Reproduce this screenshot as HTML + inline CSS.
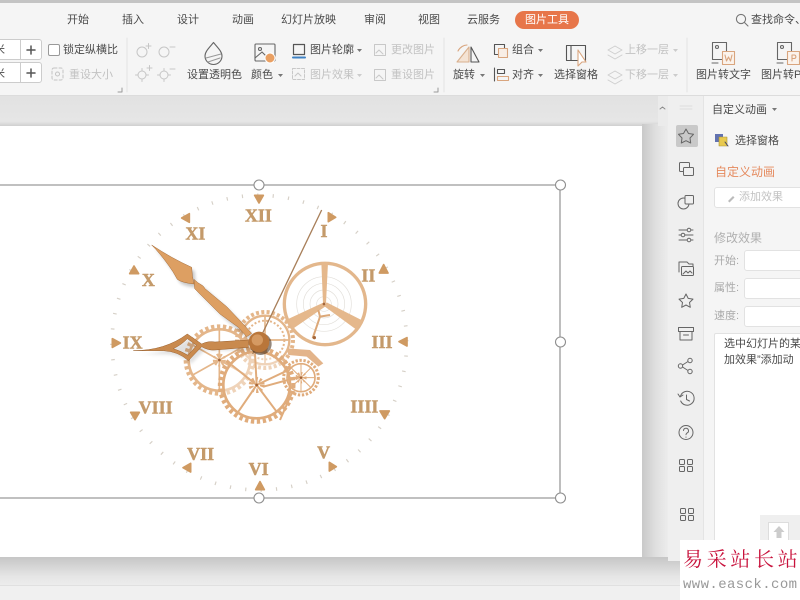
<!DOCTYPE html>
<html lang="zh"><head><meta charset="utf-8"><title>WPS</title>
<style>
html,body{margin:0;padding:0;background:#eee}
#p{position:relative;width:800px;height:600px;overflow:hidden;background:#e5e5e5;font-family:"Liberation Sans","Noto Sans CJK SC",sans-serif;font-size:11px;color:#444;filter:blur(.3px)}
#p div,#p span{position:absolute;white-space:nowrap}
.t{line-height:14px;margin-top:-7px;color:#4a4a4a}
.d{color:#c2c2c2}
.g{color:#aaa}
svg{position:absolute;left:0;top:0}
.box{background:#fff;border:1px solid #e2e2e2;border-radius:3px;box-sizing:border-box}
.num{font-family:"Liberation Serif",serif;font-weight:bold;font-size:54px;fill:#c49a6a;stroke:#c49a6a;stroke-width:1.5;text-anchor:middle}
</style></head><body><div id="p">

<div style="left:0;top:0;width:800px;height:3px;background:#c4c4c4"></div>
<div style="left:0;top:3px;width:800px;height:93px;background:#f5f5f5;border-bottom:1px solid #dcdcdc;box-sizing:border-box"></div>
<div style="left:0;top:96px;width:668px;height:30px;background:linear-gradient(#e2e2e2,#e6e6e6 85%,#cfcfcf)"></div>

<div style="left:0;top:126px;width:642px;height:431px;background:#fff"></div>
<div style="left:642px;top:124px;width:26px;height:440px;background:linear-gradient(90deg,#c9c9c9,#e0e0e0 55%,#ececec)"></div>
<div style="left:0;top:557px;width:680px;height:28px;background:linear-gradient(#c6c6c6,#e6e6e6 70%,#ececec)"></div>
<div style="left:0;top:585px;width:680px;height:15px;background:#f0f0f0;border-top:1px solid #e0e0e0;box-sizing:border-box"></div>
<div style="left:658px;top:96px;width:10px;height:30px;background:#ebebeb"></div>
<div style="left:668px;top:96px;width:35px;height:465px;background:#efefef"></div>
<div style="left:703px;top:96px;width:97px;height:465px;background:#f5f5f5;border-left:1px solid #e4e4e4;box-sizing:border-box"></div>

<span class="t" style="left:67px;top:20px">开始</span>
<span class="t" style="left:122px;top:20px">插入</span>
<span class="t" style="left:177px;top:20px">设计</span>
<span class="t" style="left:232px;top:20px">动画</span>
<span class="t" style="left:281px;top:20px">幻灯片放映</span>
<span class="t" style="left:364px;top:20px">审阅</span>
<span class="t" style="left:418px;top:20px">视图</span>
<span class="t" style="left:467px;top:20px">云服务</span>
<div style="left:515px;top:11px;width:64px;height:18px;border-radius:9px;background:#e7764a"></div>
<span class="t" style="left:525px;top:20px;color:#fff">图片工具</span>
<span class="t" style="left:751px;top:20px">查找命令、</span>

<div class="box" style="left:-6px;top:39px;width:48px;height:21px;border-color:#ccc"></div>
<div class="box" style="left:-6px;top:62px;width:48px;height:21px;border-color:#ccc"></div>
<span class="t" style="left:-6px;top:50px">米</span>
<span class="t" style="left:-6px;top:74px">米</span>
<span class="t" style="left:63px;top:50px">锁定纵横比</span>
<span class="t d" style="left:69px;top:75px">重设大小</span>
<span class="t" style="left:187px;top:75px">设置透明色</span>
<span class="t" style="left:251px;top:75px">颜色</span>
<span class="t" style="left:310px;top:50px">图片轮廓</span>
<span class="t d" style="left:310px;top:75px">图片效果</span>
<span class="t d" style="left:391px;top:50px">更改图片</span>
<span class="t d" style="left:391px;top:75px">重设图片</span>
<span class="t" style="left:453px;top:75px">旋转</span>
<span class="t" style="left:512px;top:50px">组合</span>
<span class="t" style="left:512px;top:75px">对齐</span>
<span class="t" style="left:554px;top:75px">选择窗格</span>
<span class="t d" style="left:625px;top:50px">上移一层</span>
<span class="t d" style="left:625px;top:75px">下移一层</span>
<span class="t" style="left:696px;top:75px">图片转文字</span>
<span class="t" style="left:761px;top:75px">图片转PDF</span>

<span class="t" style="left:712px;top:110px">自定义动画</span>
<span class="t" style="left:735px;top:141px">选择窗格</span>
<span class="t" style="left:715px;top:172px;color:#e58a5e;font-size:12px">自定义动画</span>
<div class="box" style="left:714px;top:187px;width:100px;height:21px"></div>
<span class="t d" style="left:739px;top:197px">添加效果</span>
<span class="t" style="left:714px;top:238px;color:#b0b0b0;font-size:12px">修改效果</span>
<span class="t g" style="left:714px;top:261px">开始:</span>
<span class="t g" style="left:714px;top:288px">属性:</span>
<span class="t g" style="left:714px;top:316px">速度:</span>
<div class="box" style="left:744px;top:250px;width:70px;height:21px"></div>
<div class="box" style="left:744px;top:278px;width:70px;height:21px"></div>
<div class="box" style="left:744px;top:306px;width:70px;height:21px"></div>
<div class="box" style="left:714px;top:333px;width:100px;height:230px;border-radius:2px"></div>
<span class="t" style="left:724px;top:344px">选中幻灯片的某</span>
<span class="t" style="left:724px;top:360px">加效果”添加动</span>
<div style="left:760px;top:515px;width:40px;height:30px;background:#efefef"></div>
<div style="left:768px;top:522px;width:21px;height:23px;background:#fff;border:1px solid #ddd;box-sizing:border-box"></div>

<svg width="800" height="600" viewBox="0 0 800 600" fill="none" stroke-linecap="round" stroke-linejoin="round">
<g stroke="#e2e2e2"><path d="M127 38V92M444 38V92M687 38V92"/></g>
<g stroke="#777" stroke-width="1.1"><circle cx="741" cy="19" r="4.6"/><path d="M744.5 22.5L748 26"/></g>
<g stroke="#ccc"><path d="M20.5 40V59M20.5 63V82"/></g>
<g stroke="#555" stroke-width="1.5"><path d="M27 50H35M31 46V54M27 73H35M31 69V77"/></g>
<rect x="48.500" y="44.500" width="11" height="11" rx="1.500" stroke="#999" fill="#fff"/>
<g stroke="#c4c4c4"><rect x="52" y="68" width="11" height="12" rx="2" stroke-dasharray="3 2"/><circle cx="57.500" cy="74" r="2"/></g>
<g stroke="#999"><path d="M118 92h4v-4"/><path d="M434 92h4v-4"/></g>
<g stroke="#c6c6c6"><circle cx="142" cy="52" r="5"/><path d="M146 46h5M148.500 43.500v5M170 47h5"/><circle cx="164" cy="52" r="5"/><circle cx="142" cy="75" r="4"/><path d="M142 68.500v2M142 79.500v2M135.500 75h2M146.500 75h2M147 68h5M149.500 65.500v5"/><circle cx="164" cy="75" r="4"/><path d="M164 68.500v2M164 79.500v2M157.500 75h2M168.500 75h2M170 69h5"/></g>
<g stroke="#666" stroke-width="1.1"><path d="M213.500 42.500C209 48 205 51.500 205 56a8.500 8.500 0 0 0 17 0C222 51.500 218 48 213.500 42.500Z"/><path d="M206 58L221 54M208 62L220 58" stroke="#999"/></g>
<g stroke="#666" stroke-width="1.1"><rect x="255" y="44" width="20" height="17" rx="1"/><circle cx="260" cy="49" r="1.500"/><path d="M255 58L262 52L269 59"/></g>
<circle cx="270" cy="58" r="5" fill="#e9a063" stroke="#fff"/>
<g fill="#777" stroke="none"><path d="M278 74l5 0-2.500 3zM357 49l5 0-2.500 3zM480 74l5 0-2.500 3zM538 49l5 0-2.500 3zM538 74l5 0-2.500 3zM772 108l5 0-2.500 3z"/></g>
<g fill="#ccc" stroke="none"><path d="M357 74l5 0-2.500 3zM673 49l5 0-2.500 3zM673 74l5 0-2.500 3z"/></g>
<rect x="293.500" y="44.500" width="11" height="10" stroke="#555" stroke-width="1.2"/><path d="M293 57.500H305" stroke="#3f82c4" stroke-width="2"/>
<g stroke="#c8c8c8"><rect x="292.500" y="68.500" width="12" height="11" stroke-dasharray="3 1.500"/><path d="M295 76l3-3 3 3"/><rect x="374.500" y="44.500" width="11" height="11"/><path d="M376 53l3-3 4 4"/><rect x="374.500" y="69.500" width="11" height="11"/><path d="M376 78l3-3 4 4"/></g>
<g stroke-width="1.1"><path d="M457 62L469 47V62Z" stroke="#d9b08e" fill="#f4e3d4"/><path d="M471 47L479 62H471Z" stroke="#555"/><path d="M458 51C460 47 464 45 467 45" stroke="#d9a57e"/></g>
<g stroke-width="1.1"><rect x="494.500" y="44.500" width="10" height="10" stroke="#555"/><rect x="498.500" y="48.500" width="9" height="9" stroke="#d9a57e" fill="#f8eee6"/><path d="M494.500 68V81" stroke="#555"/><rect x="497.500" y="69.500" width="7" height="4" stroke="#555"/><rect x="497.500" y="76.500" width="11" height="4" stroke="#d9a57e"/></g>
<g stroke-width="1.1"><rect x="566.500" y="45.500" width="19" height="15" stroke="#555"/><path d="M571 46V60" stroke="#555"/><path d="M578 50V66L582 62L586 62Z" stroke="#d9a57e" fill="#fff"/></g>
<g stroke="#cfcfcf"><path d="M608 50l7-4 7 4-7 4zM608 55l7 4 7-4M608 75l7-4 7 4-7 4zM608 80l7 4 7-4"/></g>
<g stroke-width="1.1"><rect x="712.500" y="42.500" width="14" height="17" stroke="#666"/><circle cx="717" cy="47" r="1.500" stroke="#666"/><rect x="722.500" y="51.500" width="12" height="13" stroke="#d9a57e" fill="#fbf3ec"/><path d="M725 55l1.500 6 2-4 2 4 1.500-6" stroke="#d9a57e"/><path d="M712 63h6" stroke="#666"/></g>
<g stroke-width="1.1"><rect x="777.500" y="42.500" width="14" height="17" stroke="#666"/><circle cx="782" cy="47" r="1.500" stroke="#666"/><rect x="787.500" y="51.500" width="12" height="13" stroke="#d9a57e" fill="#fbf3ec"/><path d="M792 61v-6h2.500a1.800 1.800 0 0 1 0 3.500H792" stroke="#d9a57e"/><path d="M777 63h6" stroke="#666"/></g>

<path d="M660 109l2.500-2 2.500 2" stroke="#888"/>
<path d="M680 106H692M680 109H692" stroke="#ddd"/>
<rect x="676" y="125" width="22" height="22" rx="2" fill="#c9c9c9"/>
<g stroke="#666" stroke-width="1">
<path d="M686 129l2.500 4.500 5 .8-3.500 3.700.7 5-4.700-2.300-4.700 2.300.7-5-3.500-3.700 5-.8z"/>
<rect x="679.500" y="162.500" width="10" height="9" rx="1"/><rect x="683.500" y="167.500" width="10" height="8" rx="1" fill="#efefef"/>
<circle cx="683.500" cy="203.500" r="5.500"/><rect x="685" y="195.500" width="8.500" height="8.500" rx="1" fill="#efefef"/>
<path d="M679 230H687M691 230H693M679 235H681M685 235H693M679 240H687M691 240H693"/><circle cx="689" cy="230" r="1.800"/><circle cx="683" cy="235" r="1.800"/><circle cx="689" cy="240" r="1.800"/>
<path d="M679 272V262h8l2 2h4v2"/><rect x="681.500" y="266.500" width="12" height="9" rx="1"/><path d="M683 274l3-3 2 2 2-2 2 2"/>
<path d="M686 294l2.200 4.400 4.800.7-3.500 3.400.8 4.800-4.300-2.300-4.300 2.300.8-4.800-3.500-3.400 4.800-.7z"/>
<rect x="678.500" y="327.500" width="15" height="4" /><path d="M680 331.500V340h12V331.500M683.500 335h5"/>
<circle cx="690" cy="360.500" r="2.200"/><circle cx="680.500" cy="366" r="2.200"/><circle cx="690" cy="371.500" r="2.200"/><path d="M682.500 365L688 361.500M682.500 367L688 370.500"/>
<path d="M680.500 396a7 7 0 1 1 .2 5M678 394l2 3 3-2M686.500 395v4.500l3 1.500"/>
<circle cx="686" cy="432.500" r="7"/><path d="M683.500 430.500a2.500 2.500 0 1 1 3.500 2.500c-.8.500-1 .8-1 1.800M686 437v.3"/>
<rect x="679.500" y="459.500" width="5" height="5" rx="1"/><rect x="687.500" y="459.500" width="5" height="5" rx="1"/><rect x="679.500" y="466.500" width="5" height="5" rx="1"/><rect x="687.500" y="466.500" width="5" height="5" rx="1"/>
<rect x="680.500" y="508.500" width="5" height="5" rx="1"/><rect x="688.500" y="508.500" width="5" height="5" rx="1"/><rect x="680.500" y="515.500" width="5" height="5" rx="1"/><rect x="688.500" y="515.500" width="5" height="5" rx="1"/>
</g>
<rect x="715" y="134" width="8" height="8" fill="#6272b0"/><rect x="719" y="137" width="8" height="9" fill="#e8c94f" stroke="#a8933a" stroke-width=".6"/><path d="M725 142l3 4" stroke="#446" />
<path d="M728 201l5-5 1.500 1.500-5 5z" fill="#bbb"/>
<path d="M773.500 532h3v6h5v-6h3l-5.500-6z" fill="#ccc"/>

<path d="M0 185H560V498H0" stroke="#9a9a9a" stroke-width="1.300"/>
<g fill="#fff" stroke="#8f8f8f" stroke-width="1.100"><circle cx="259" cy="185" r="5"/><circle cx="560.500" cy="185" r="5"/><circle cx="560.500" cy="342" r="5"/><circle cx="560.500" cy="498" r="5"/><circle cx="259" cy="498" r="5"/></g>

<g transform="translate(100 190) scale(.33333)" stroke-linecap="butt">
<circle cx="478" cy="458" r="442" stroke="#d6d0c7" stroke-width="11" stroke-dasharray="3.500 42.800" transform="rotate(-1 478 458)"/>
<g fill="#cf9a62" stroke="#cf9a62" stroke-width="5">
<path d="M464 16H490L477 39Z"/><path d="M685 68L707 82L685 95Z"/><path d="M851 224L864 249H838Z"/><path d="M921 443V468L897 455Z"/><path d="M840 663H868L854 686Z"/><path d="M688 817L709 830L688 843Z"/><path d="M480 875L493 899H467Z"/><path d="M272 820V846L249 833Z"/><path d="M92 667H118L105 689Z"/><path d="M37 446L61 459L37 472Z"/><path d="M102 228L116 251H89Z"/><path d="M268 71V97L245 84Z"/>
</g>
<text class="num" x="475" y="94">XII</text><text class="num" x="672" y="141">I</text><text class="num" x="805" y="274">II</text><text class="num" x="846" y="474">III</text><text class="num" x="793" y="668">IIII</text><text class="num" x="671" y="805">V</text><text class="num" x="476" y="855">VI</text><text class="num" x="302" y="810">VII</text><text class="num" x="167" y="670">VIII</text><text class="num" x="98" y="476">IX</text><text class="num" x="145" y="288">X</text><text class="num" x="286" y="148">XI</text>

<g stroke="#e2dfda" stroke-width="2"><circle cx="672" cy="342" r="22"/><circle cx="672" cy="342" r="42"/><circle cx="672" cy="342" r="62"/><circle cx="672" cy="342" r="82"/></g>
<circle cx="675" cy="342" r="122" stroke="#e3b78c" stroke-width="10"/>
<g fill="#e5b88c"><path d="M664 218H684L678 340H669Z"/><path d="M670 338L678 348L582 414L554 392Z"/><path d="M672 348L680 337L788 392L768 418Z"/></g>
<path d="M638 445L660 380L690 375M660 380L655 360" stroke="#dca878" stroke-width="6"/>
<circle cx="643" cy="443" r="5" fill="#a5673a"/><circle cx="672" cy="342" r="4" fill="#a5673a"/>
<path d="M560 475L630 480L670 520L655 530L620 500L565 495Z" fill="#e3b48a"/>

<g stroke="#e4b68a">
<circle cx="358" cy="510" r="92" stroke-width="8"/><circle cx="358" cy="510" r="101" stroke-width="12" stroke-dasharray="10 8"/>
<path d="M358 418V602M278 465L438 555M278 555L438 465" stroke-width="5"/><circle cx="358" cy="510" r="13" stroke-width="13" stroke-dasharray="5 4"/>
<circle cx="495" cy="450" r="73" stroke-width="7"/><circle cx="495" cy="450" r="84" stroke-width="12" stroke-dasharray="9 7"/><circle cx="495" cy="450" r="58" stroke-width="6" stroke-dasharray="6 6"/>
<path d="M495 377V523M422 450H568" stroke-width="5"/>
</g>
<circle cx="470" cy="585" r="100" fill="#fff" fill-opacity=".4"/>
<g stroke="#e0ac7c">
<circle cx="470" cy="585" r="100" stroke-width="8"/><circle cx="470" cy="585" r="110" stroke-width="13" stroke-dasharray="10 8"/>
<path d="M470 585L395 525M470 585L565 540M470 585L415 665M470 585L530 665M470 585L465 490" stroke-width="6"/><circle cx="470" cy="585" r="17" stroke-width="14" stroke-dasharray="6 5"/>
<circle cx="603" cy="563" r="42" stroke-width="5"/><circle cx="603" cy="563" r="52" stroke-width="9" stroke-dasharray="7 5"/>
<path d="M603 523V603M563 563H643M575 535L631 591M631 535L575 591" stroke-width="3"/><circle cx="603" cy="563" r="12" stroke-width="10" stroke-dasharray="4 4"/>
<path d="M490 590L600 560M575 610L540 690" stroke-width="6"/>
</g>
<circle cx="358" cy="510" r="4" fill="#a5673a"/><circle cx="470" cy="585" r="4" fill="#a5673a"/><circle cx="603" cy="563" r="4" fill="#a5673a"/>

<g opacity=".22" transform="translate(9 11)" style="filter:blur(5px)">
<path fill="#000" d="M155 165Q215 205 275 232Q276 260 282 282Q245 278 232 268Q220 245 205 225Q180 190 155 165Z"/><path fill="#000" d="M285 270L312 290L380 350L450 425L440 438L360 370L285 295Z"/><path fill="#000" d="M100 482Q195 482 262 432L305 462L445 452V472L305 470L265 510Q235 484 190 482Z" opacity=".55"/>
</g>
<path d="M665 60L478 450L458 492" stroke="#a87f5a" stroke-width="4"/>
<path d="M155 165Q215 205 275 232Q276 260 282 282Q245 278 232 268Q220 245 205 225Q180 190 155 165Z" fill="#dd9f62" stroke="#a56a36" stroke-width="1.500"/>
<path d="M282 268Q295 280 300 282Q312 288 315 296L380 350L420 392L455 430L440 440L415 412L360 372L300 312L284 296Z" fill="#dd9f62" stroke="#a56a36" stroke-width="1.500"/>
<path fill-rule="evenodd" d="M100 482Q195 482 262 432L305 462Q325 452 345 456L445 450V472L345 480Q325 482 305 470L265 512Q235 484 190 482ZM262 446Q245 464 220 476Q245 484 264 496L290 466Z" fill="#c98a4e" stroke="#9a5f2c" stroke-width="1.500"/>
<circle cx="482" cy="462" r="33" fill="#3c2410" opacity=".55"/>
<circle cx="477" cy="456" r="31" fill="#b9763a"/><circle cx="472" cy="450" r="17" fill="#d59a62"/>
</g>
</svg>

<div style="left:680px;top:540px;width:120px;height:60px;background:#fff"></div>
<span style="left:683px;top:544px;font-family:'Noto Serif CJK SC','Liberation Serif',serif;font-size:20px;line-height:28px;color:#c8123c;letter-spacing:3.700px">易采站长站</span>
<span style="left:683px;top:576px;font-family:'Liberation Mono',monospace;font-size:14px;line-height:18px;color:#999;letter-spacing:.4px">www.easck.com</span>
</div></body></html>
